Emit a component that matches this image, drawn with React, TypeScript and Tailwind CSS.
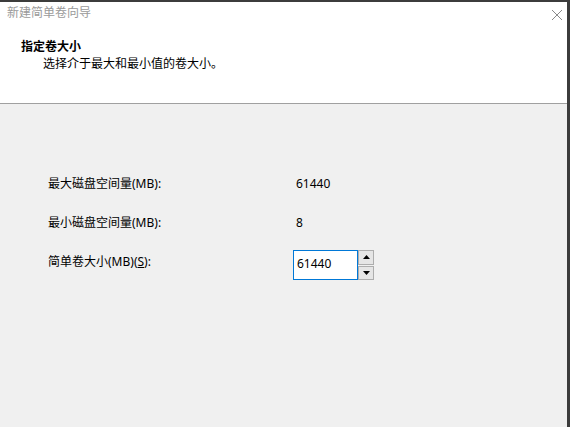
import { useState } from 'react';

const font = { fontFamily: '"Segoe UI", "Noto Sans", "Noto Sans CJK SC", sans-serif' };

const Spinner = () => (
    <div className="flex flex-col w-[16px] h-[30px] gap-[1px]">
        <button className="flex-1 flex items-center justify-center bg-[#e5e5e5] border border-[#adadad]">
            <svg width="7" height="4" viewBox="0 0 7 4">
                <path d="M3.5 0L7 4H0z" fill="#000" />
            </svg>
        </button>
        <button className="flex-1 flex items-center justify-center bg-[#e5e5e5] border border-[#adadad]">
            <svg width="7" height="4" viewBox="0 0 7 4">
                <path d="M0 0h7L3.5 4z" fill="#000" />
            </svg>
        </button>
    </div>
);

const App = () => {
    const [size, setSize] = useState('61440');

    return (
        <div
            className="w-[570px] h-[427px] flex flex-col bg-[#f0f0f0] border-t-[2px] border-r-[3px] border-[#3c3c3c] text-[12px] leading-[16px] text-black"
            style={font}
        >
            <div className="h-[102px] bg-white border-b border-[#a0a0a0] flex flex-col">
                <div className="flex justify-between pt-[3px] pl-[7px] pr-[4px]">
                    <div className="text-[#9a9a9a]">新建简单卷向导</div>
                    <svg width="12" height="12" viewBox="0 0 12 12" className="mt-[4px]">
                        <path d="M1 1L11 11M11 1L1 11" stroke="#8a8a8a" strokeWidth="1" />
                    </svg>
                </div>
                <div className="pl-[21px] mt-[18px] font-bold">指定卷大小</div>
                <div className="pl-[43px] mt-[1px]">选择介于最大和最小值的卷大小。</div>
            </div>

            <div className="flex flex-col pl-[48px] pt-[72px]">
                <div className="flex">
                    <div className="w-[248px]">最大磁盘空间量(MB):</div>
                    <div>61440</div>
                </div>
                <div className="flex mt-[23px]">
                    <div className="w-[248px]">最小磁盘空间量(MB):</div>
                    <div>8</div>
                </div>
                <div className="flex items-start mt-[19px]">
                    <div className="w-[245px] mt-[4px]">
                        简单卷大小(MB)(<span className="underline">S</span>):
                    </div>
                    <input
                        type="text"
                        value={size}
                        onChange={(e) => setSize(e.target.value)}
                        className="w-[65px] h-[30px] border border-[#0078d7] bg-white pl-[3px] pb-[4px] outline-none text-[12px]"
                        style={font}
                    />
                    <Spinner />
                </div>
            </div>
        </div>
    );
};

export default App;
